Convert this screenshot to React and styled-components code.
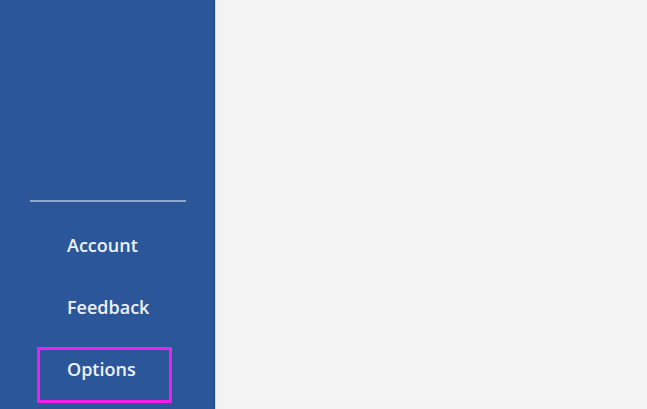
import React from "react";
import styled, { createGlobalStyle } from "styled-components";

const Global = createGlobalStyle`
  html, body { margin: 0; padding: 0; height: 100%; }
  body { background: #f3f3f3; overflow: hidden; }
  #root { height: 100%; }
`;

const Page = styled.div`
  display: flex;
  width: 647px;
  height: 409px;
  background: #f3f3f3;
`;

const Sidebar = styled.nav`
  width: 215px;
  flex: none;
  background: #2b579a;
  border-right: 2px solid #24508f;
  box-shadow: 1px 0 0 #d4dbe6;
  display: flex;
  flex-direction: column;
  justify-content: flex-end;
  padding: 0 0 6px 30px;
  box-sizing: border-box;
`;

const Divider = styled.hr`
  width: 156px;
  margin: 0 0 21px 0;
  border: none;
  border-top: 2px solid #8ba5cc;
`;

const Item = styled.div`
  box-sizing: border-box;
  width: 135px;
  height: 56px;
  margin: ${(p) => (p.$gap ? "6px" : "0")} 0 0 7px;
  padding: 0 0 12px 27px;
  display: flex;
  align-items: center;
  font-family: "Open Sans", "Noto Sans", sans-serif;
  font-size: 18px;
  font-weight: 600;
  color: #eef2f8;
  border: 3px solid ${(p) => (p.$highlight ? "#f21ef0" : "transparent")};
`;

const Content = styled.main`
  flex: 1;
`;

export default function App() {
  return (
    <>
      <Global />
      <Page>
        <Sidebar>
          <Divider />
          <Item>Account</Item>
          <Item $gap>Feedback</Item>
          <Item $gap $highlight>Options</Item>
        </Sidebar>
        <Content />
      </Page>
    </>
  );
}
